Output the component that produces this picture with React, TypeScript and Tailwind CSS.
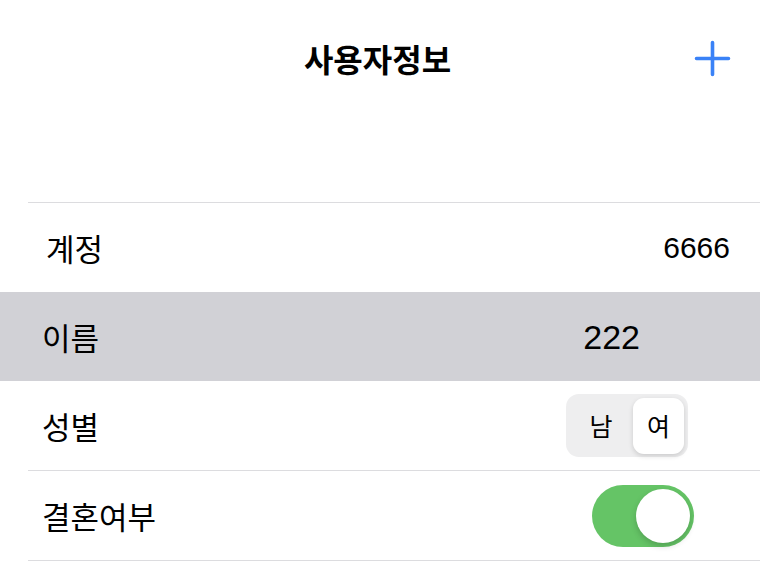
import React from "react";

const KR = { fontFamily: '"Noto Sans CJK KR", sans-serif' };

export default function App() {
  return (
    <div
      className="w-[760px] h-[564px] bg-white overflow-hidden text-black"
      style={{ fontFamily: '"Liberation Sans", "Noto Sans CJK KR", sans-serif' }}
    >
      {/* Nav bar */}
      <div className="h-[116px] grid grid-cols-[1fr_auto_1fr] items-center">
        <div />
        <div className="text-[32px] font-bold leading-none pr-[5px]" style={KR}>
          사용자정보
        </div>
        <div className="flex justify-end pr-[29px]">
          <svg width="37" height="37" viewBox="0 0 37 37" fill="none">
            <path d="M18.5 2.5V34.5M2.5 18.5H34.5" stroke="#3a82f7" strokeWidth="3.6" strokeLinecap="round" />
          </svg>
        </div>
      </div>

      <div className="h-[86px]" />

      {/* Row: 계정 */}
      <div className="ml-[28px] border-t border-[#dcdcdf] h-[90px] flex items-center justify-between pl-[18px] pr-[30px]">
        <span className="text-[31px] leading-none" style={KR}>계정</span>
        <span className="text-[30px] leading-none">6666</span>
      </div>

      {/* Row: 이름 (highlighted) */}
      <div className="bg-[#d1d1d6] h-[89px] flex items-center justify-between pl-[42px] pr-[120px]">
        <span className="text-[31px] leading-none" style={KR}>이름</span>
        <span className="text-[34px] leading-none">222</span>
      </div>

      {/* Row: 성별 */}
      <div className="ml-[28px] border-b border-[#dcdcdf] h-[90px] flex items-center justify-between pl-[14px] pr-[72px]">
        <span className="text-[31px] leading-none" style={KR}>성별</span>
        <div className="w-[122px] h-[63px] rounded-[13px] bg-[#eeeeef] flex items-center pl-[3px] pr-[4px]" style={KR}>
          <div className="flex-1 h-[56px] flex items-center justify-center text-[25px] leading-none">남</div>
          <div className="w-[51px] h-[56px] rounded-[11px] bg-white shadow-[0_2px_5px_rgba(0,0,0,0.15)] flex items-center justify-center text-[25px] leading-none">
            여
          </div>
        </div>
      </div>

      {/* Row: 결혼여부 */}
      <div className="ml-[28px] border-b border-[#dcdcdf] h-[90px] flex items-center justify-between pl-[14px] pr-[66px]">
        <span className="text-[31px] leading-none" style={KR}>결혼여부</span>
        <div className="w-[102px] h-[62px] rounded-full bg-[#65c466] flex items-center justify-end pr-[4px]">
          <div className="w-[54px] h-[54px] rounded-full bg-white shadow-[0_3px_6px_rgba(0,0,0,0.18)]" />
        </div>
      </div>
    </div>
  );
}
